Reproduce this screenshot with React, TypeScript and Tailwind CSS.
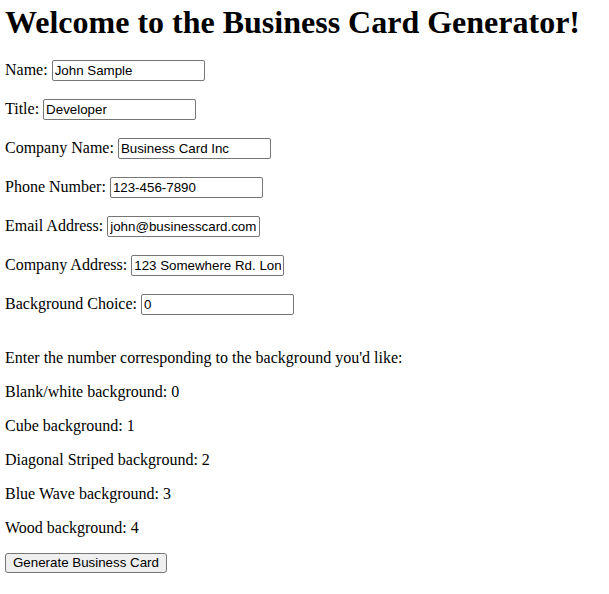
import React from 'react';

const fields = [
  { label: 'Name:', value: 'John Sample' },
  { label: 'Title:', value: 'Developer' },
  { label: 'Company Name:', value: 'Business Card Inc' },
  { label: 'Phone Number:', value: '123-456-7890' },
  { label: 'Email Address:', value: 'john@businesscard.com' },
  { label: 'Company Address:', value: '123 Somewhere Rd. London' },
  { label: 'Background Choice:', value: '0' },
];

const options = [
  "Enter the number corresponding to the background you'd like:",
  'Blank/white background: 0',
  'Cube background: 1',
  'Diagonal Striped background: 2',
  'Blue Wave background: 3',
  'Wood background: 4',
];

export default function App() {
  return (
    <div className="min-h-screen bg-white pl-[5px] pt-[4px] text-black font-['Liberation_Serif',serif] text-[16px]">
      <h1 className="text-[32px] font-bold leading-[37px] h-[37px] mb-[18px]">
        Welcome to the Business Card Generator!
      </h1>

      <form onSubmit={(e) => e.preventDefault()}>
        <div className="flex flex-col gap-[17px]">
          {fields.map((f) => (
            <label key={f.label} className="flex items-center gap-[4px] h-[22px]">
              <span>{f.label}</span>
              <input
                type="text"
                defaultValue={f.value}
                className="w-[153px] h-[21px] border border-[#767676] rounded-[2px] px-[2px] py-px bg-white text-[13.33px] font-['Liberation_Sans',Arial,sans-serif] outline-none"
              />
            </label>
          ))}
        </div>

        <div className="flex flex-col gap-[16px] mt-[34px]">
          {options.map((o) => (
            <p key={o} className="leading-[18px] h-[18px]">
              {o}
            </p>
          ))}
        </div>

        <button
          type="submit"
          className="mt-[16px] h-[20px] px-[7px] border border-[#767676] rounded-[3px] bg-[#efefef] text-[13.33px] leading-none font-['Liberation_Sans',Arial,sans-serif]"
        >
          Generate Business Card
        </button>
      </form>
    </div>
  );
}
